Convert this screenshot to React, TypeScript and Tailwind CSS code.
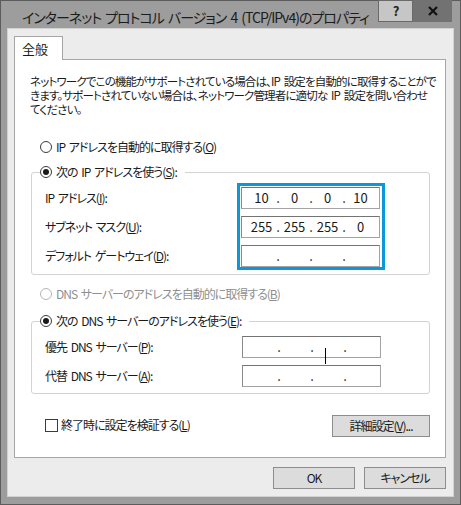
import { ReactNode } from 'react';

const font = "[font-family:'Noto_Sans_CJK_JP',sans-serif] [font-feature-settings:'palt']";

function Radio({ checked, disabled }: { checked?: boolean; disabled?: boolean }) {
  return (
    <span
      className={
        'flex h-[12px] w-[12px] shrink-0 items-center justify-center rounded-full border bg-white ' +
        (disabled ? 'border-[#b5b5b5]' : 'border-[#3c3c3c]')
      }
    >
      {checked && <span className="h-[6px] w-[6px] rounded-full bg-[#1a1a1a]" />}
    </span>
  );
}

function RadioRow({ checked, disabled, children }: { checked?: boolean; disabled?: boolean; children: ReactNode }) {
  return (
    <div className={'flex h-[18px] items-center gap-[4px] ' + (disabled ? 'text-[#8f8f8f]' : 'text-[#1a1a1a]')}>
      <Radio checked={checked} disabled={disabled} />
      <span className="whitespace-nowrap">{children}</span>
    </div>
  );
}

function IpField({ parts, caret }: { parts: string[]; caret?: boolean }) {
  return (
    <div className="flex h-[22px] w-[139px] items-center border border-[#a3a3a3] border-t-[#747474] border-l-[#8a8a8a] bg-white pl-[6px] text-[13px] tracking-normal text-[#1a1a1a]">
      {parts.map((p, i) => (
        <div key={i} className="flex items-center">
          <span className="relative w-[27px] text-center">
            {p}
            {caret && i === 2 && <span className="absolute left-[10px] top-[1px] h-[16px] w-px bg-black" />}
          </span>
          {i < 3 && <span className="w-[6px] text-center">.</span>}
        </div>
      ))}
    </div>
  );
}

function Btn({ children, className = '' }: { children: ReactNode; className?: string }) {
  return (
    <div
      className={
        'flex h-[22px] items-center justify-center border border-[#8d8d8d] bg-[#dcdcdc] text-[12px] text-[#1a1a1a] ' +
        className
      }
    >
      {children}
    </div>
  );
}

export default function App() {
  return (
    <div className={`${font} flex h-[505px] w-[461px] flex-col border border-[#5c5c5c] bg-[#9d9d9d] text-[12px] leading-[14px] tracking-[-1px] [word-spacing:2px]`}>
      {/* Title bar */}
      <div className="flex h-[27px] shrink-0 items-start">
        <div className="min-w-0 flex-1 overflow-hidden pl-[21px] pt-[5px] text-[14px] leading-[22px] tracking-[-1px] whitespace-nowrap text-[#1c1c1c]">
          インターネット プロトコル バージョン 4 (TCP/IPv4)のプロパティ
        </div>
        <div className="-mt-px flex h-[22px] shrink-0 items-stretch pr-[8px]">
          <div className="flex w-[35px] items-center justify-center border border-[#6a6a6a] bg-[#c6c6c6] text-[13px] font-bold text-[#222]">
            ?
          </div>
          <div className="flex w-[39px] items-center justify-center bg-[#727272]">
            <svg width="10" height="10" viewBox="0 0 10 10">
              <path d="M1 1L9 9M9 1L1 9" stroke="#111" strokeWidth="2.2" />
            </svg>
          </div>
        </div>
      </div>

      {/* Client area */}
      <div className="mx-[6px] mb-[7px] flex flex-1 flex-col border border-[#d2d2d2] bg-[#ececec] pl-[6px] pr-[7px] pt-[7px]">
        {/* Tab */}
        <div className="relative z-10 -mb-px flex h-[24px] w-[49px] items-center border border-b-0 border-[#a5a5a5] bg-white pl-[7px] text-[13px] tracking-normal text-[#1a1a1a]">
          全般
        </div>

        {/* Tab panel */}
        <div className="flex h-[399px] flex-col border border-[#a5a5a5] bg-white pl-[15px] pr-[15px] pt-[14px] text-[#1a1a1a]">
          <p className="whitespace-nowrap text-[11.5px] tracking-[-0.85px]">
            ネットワークでこの機能がサポートされている場合は、IP 設定を自動的に取得することがで
            <br />
            きます。サポートされていない場合は、ネットワーク管理者に適切な IP 設定を問い合わせ
            <br />
            てください。
          </p>

          <div className="mt-[22px] ml-[10px]">
            <RadioRow>
              IP アドレスを自動的に取得する(<u>O</u>)
            </RadioRow>
          </div>

          <fieldset className="mt-[7px] ml-px rounded-[3px] border border-[#d3d3d3] pb-[4px] pl-[13px] pr-[44px]">
            <legend className="ml-[-5px] bg-white pr-[8px]">
              <RadioRow checked>
                次の IP アドレスを使う(<u>S</u>):
              </RadioRow>
            </legend>
            <div className="mt-[2px] flex justify-between">
              <div className="flex flex-col gap-[7px] pt-[4px]">
                <div className="flex h-[22px] items-center whitespace-nowrap">
                  IP アドレス(<u>I</u>):
                </div>
                <div className="flex h-[22px] items-center whitespace-nowrap">
                  サブネット マスク(<u>U</u>):
                </div>
                <div className="flex h-[22px] items-center whitespace-nowrap">
                  デフォルト ゲートウェイ(<u>D</u>):
                </div>
              </div>
              <div className="flex flex-col gap-[7px] border-[3px] border-[#0a98dc] bg-white pl-px pr-[2px] pt-px">
                <IpField parts={['10', '0', '0', '10']} />
                <IpField parts={['255', '255', '255', '0']} />
                <IpField parts={['', '', '', '']} />
              </div>
            </div>
          </fieldset>

          <div className="mt-[10px] ml-[10px]">
            <RadioRow disabled>
              DNS サーバーのアドレスを自動的に取得する(<u>B</u>)
            </RadioRow>
          </div>

          <fieldset className="mt-[9px] ml-px rounded-[3px] border border-[#d3d3d3] pb-[6px] pl-[13px] pr-[48px]">
            <legend className="ml-[-5px] bg-white pr-[8px]">
              <RadioRow checked>
                次の DNS サーバーのアドレスを使う(<u>E</u>):
              </RadioRow>
            </legend>
            <div className="mt-[6px] flex justify-between">
              <div className="flex flex-col gap-[7px]">
                <div className="flex h-[22px] items-center whitespace-nowrap">
                  優先 DNS サーバー(<u>P</u>):
                </div>
                <div className="flex h-[22px] items-center whitespace-nowrap">
                  代替 DNS サーバー(<u>A</u>):
                </div>
              </div>
              <div className="flex flex-col gap-[7px]">
                <IpField parts={['', '', '', '']} caret />
                <IpField parts={['', '', '', '']} />
              </div>
            </div>
          </fieldset>

          <div className="mt-[21px] ml-px flex items-start justify-between">
            <div className="mt-[1px] ml-[14px] flex h-[18px] items-center gap-[3px]">
              <span className="h-[13px] w-[13px] border border-[#3c3c3c] bg-white" />
              <span className="whitespace-nowrap">
                終了時に設定を検証する(<u>L</u>)
              </span>
            </div>
            <Btn className="w-[98px]">
              詳細設定(<u>V</u>)...
            </Btn>
          </div>
        </div>

        {/* Dialog buttons */}
        <div className="mt-[9px] flex justify-end gap-[9px]">
          <Btn className="w-[82px]">OK</Btn>
          <Btn className="w-[82px]">キャンセル</Btn>
        </div>
      </div>
    </div>
  );
}
